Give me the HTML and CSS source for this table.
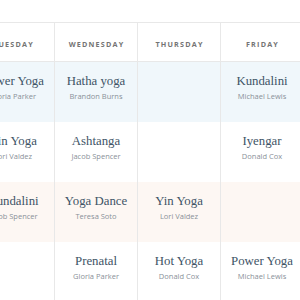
FILE: index.html
```html
<!DOCTYPE html>
<html lang="en">
<head>
<meta charset="utf-8">
<title>Yoga schedule</title>
<link rel="stylesheet" href="styles.css">
</head>
<body>
<div class="viewport">
  <div class="schedule">
    <div class="row head">
      <div class="cell">Tuesday</div>
      <div class="cell">Wednesday</div>
      <div class="cell">Thursday</div>
      <div class="cell">Friday</div>
    </div>
    <div class="row tint-blue">
      <div class="cell"><span class="name">Power Yoga</span><span class="teacher">Gloria Parker</span></div>
      <div class="cell"><span class="name">Hatha yoga</span><span class="teacher">Brandon Burns</span></div>
      <div class="cell"></div>
      <div class="cell"><span class="name">Kundalini</span><span class="teacher">Michael Lewis</span></div>
    </div>
    <div class="row">
      <div class="cell"><span class="name">Yin Yoga</span><span class="teacher">Lori Valdez</span></div>
      <div class="cell"><span class="name">Ashtanga</span><span class="teacher">Jacob Spencer</span></div>
      <div class="cell"></div>
      <div class="cell"><span class="name">Iyengar</span><span class="teacher">Donald Cox</span></div>
    </div>
    <div class="row tint-peach">
      <div class="cell"><span class="name">Kundalini</span><span class="teacher">Jacob Spencer</span></div>
      <div class="cell"><span class="name">Yoga Dance</span><span class="teacher">Teresa Soto</span></div>
      <div class="cell"><span class="name">Yin Yoga</span><span class="teacher">Lori Valdez</span></div>
      <div class="cell"></div>
    </div>
    <div class="row last">
      <div class="cell"></div>
      <div class="cell"><span class="name">Prenatal</span><span class="teacher">Gloria Parker</span></div>
      <div class="cell"><span class="name">Hot Yoga</span><span class="teacher">Donald Cox</span></div>
      <div class="cell"><span class="name">Power Yoga</span><span class="teacher">Michael Lewis</span></div>
    </div>
  </div>
</div>
</body>
</html>
```
FILE: styles.css
```css
html, body {
  margin: 0;
  padding: 0;
  background: #ffffff;
}

body {
  width: 300px;
  height: 300px;
  overflow: hidden;
  font-family: "Open Sans", "Liberation Sans", sans-serif;
}

.viewport {
  width: 300px;
  overflow: hidden;
  padding-top: 22px;
}

.schedule {
  width: 332px;
  margin-left: -28px;
}

.row {
  display: flex;
  height: 60px;
}

.cell {
  box-sizing: border-box;
  width: 83px;
  flex: none;
  border-right: 1px solid #e8e8e8;
  display: flex;
  flex-direction: column;
  align-items: center;
  justify-content: center;
  padding-bottom: 7px;
  white-space: nowrap;
}

.head {
  height: 38px;
  border-top: 1px solid #e8e8e8;
  border-bottom: 1px solid #e8e8e8;
}

.head .cell {
  padding: 3px 0 0 1px;
  font-family: "Open Sans", "Liberation Sans", sans-serif;
  font-weight: 700;
  font-size: 7.2px;
  letter-spacing: 1.2px;
  text-transform: uppercase;
  color: #747474;
}

.tint-blue {
  background: #f0f7fb;
}

.tint-peach {
  background: #fdf7f3;
}

.last {
  border-bottom: 1px solid #e8e8e8;
}

.name {
  font-family: "Liberation Serif", "DejaVu Serif", serif;
  font-size: 12.8px;
  line-height: 16px;
  color: #3e5466;
}

.teacher {
  font-size: 7.5px;
  line-height: 15px;
  color: #8a9199;
}
```
